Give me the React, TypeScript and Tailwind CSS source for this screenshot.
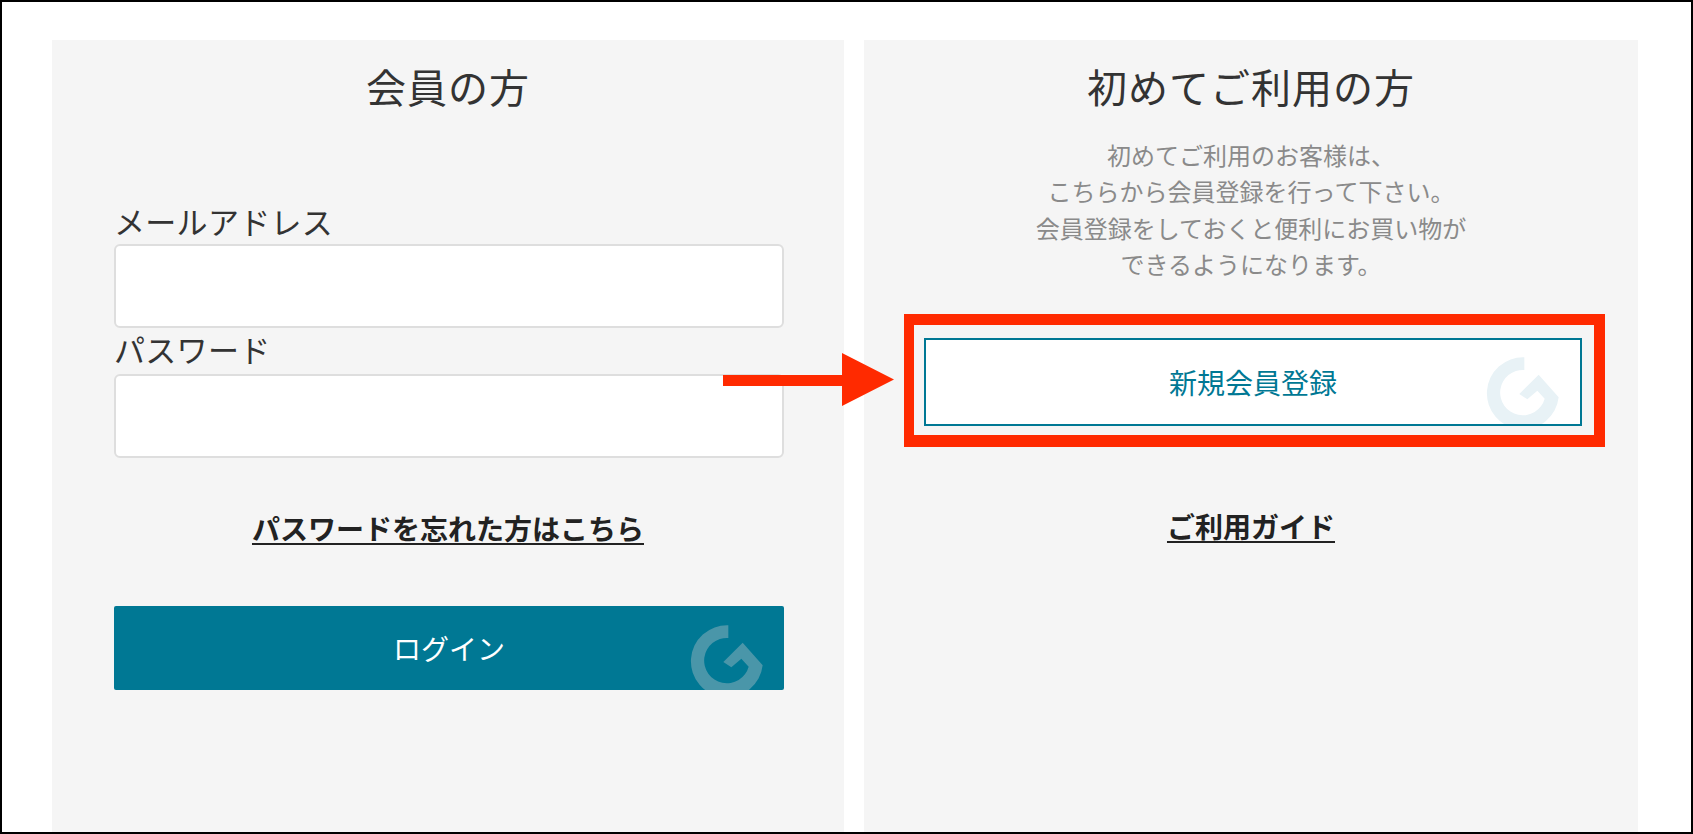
const FONT = "font-['Noto_Sans_CJK_JP','Noto_Sans',sans-serif]";

function GMark({ className, fill }: { className: string; fill: string }) {
  return (
    <svg viewBox="90 66 222 222" className={className} aria-hidden="true">
      <path
        fill={fill}
        d="M205 70A108 108 0 1 0 308 190L248 122L190 180L214 196L244 170L266 194A68 68 0 1 1 205 108Z"
      />
    </svg>
  );
}

function Field({ label, className, inputClassName }: { label: string; className: string; inputClassName: string }) {
  return (
    <div className={className}>
      <label className="block text-[31px] leading-[32px] tracking-[0.3px] text-[#333]">{label}</label>
      <input
        type="text"
        className={`block h-[84px] w-full rounded-md border-2 border-[#dedede] bg-white outline-none ${inputClassName}`}
      />
    </div>
  );
}

export default function App() {
  return (
    <div className={`relative box-border flex h-screen w-full gap-[20px] overflow-hidden border-2 border-black bg-white pl-[50px] pt-[38px] ${FONT}`}>
      {/* 会員の方 */}
      <section className="w-[792px] bg-[#f5f5f5] pl-[62px] pr-[60px] pt-[22px]">
        <h2 className="pr-[2px] text-center text-[40px] leading-[48px] tracking-[1px] text-[#333]">会員の方</h2>
        <Field label="メールアドレス" className="mt-[95px]" inputClassName="mt-[7px]" />
        <Field label="パスワード" className="mt-[5px]" inputClassName="mt-[9px]" />
        <p className="mt-[52px] pr-[2px] text-center text-[28px] font-bold leading-[36px] text-[#222]">
          <a className="underline underline-offset-[3px]">パスワードを忘れた方はこちら</a>
        </p>
        <button className="relative mt-[60px] block h-[84px] w-full overflow-hidden rounded-[2px] bg-[#007894] text-[28px] text-white">
          ログイン
          <GMark className="absolute right-[20px] top-[18px] h-[74px] w-[74px]" fill="#4a96a9" />
        </button>
      </section>

      {/* 初めてご利用の方 */}
      <section className="w-[774px] bg-[#f5f5f5] pt-[22px]">
        <h2 className="text-center text-[40px] leading-[48px] tracking-[1px] text-[#333]">初めてご利用の方</h2>
        <p className="mt-[26.5px] text-center text-[24px] leading-[36.5px] text-[#8a8a8a]">
          初めてご利用のお客様は、
          <br />
          こちらから会員登録を行って下さい。
          <br />
          会員登録をしておくと便利にお買い物が
          <br />
          できるようになります。
        </p>
        <div className="ml-[40px] mt-[31.5px] box-border h-[133px] w-[701px] border-b-[12px] border-l-[10px] border-r-[11px] border-t-[11px] border-[#ff2a00] pb-[9px] pl-[10px] pr-[12px] pt-[13px]">
          <button className="relative box-border block h-full w-full overflow-hidden border-2 border-[#007894] bg-white text-[28px] text-[#007894]">
            新規会員登録
            <GMark className="absolute right-[20px] top-[16px] h-[74px] w-[74px]" fill="#e8f2f6" />
          </button>
        </div>
        <p className="mt-[61px] text-center text-[28px] font-bold leading-[36px] text-[#222]">
          <a className="underline underline-offset-[3px]">ご利用ガイド</a>
        </p>
      </section>

      {/* annotation arrow */}
      <svg className="absolute left-[721px] top-[351px] h-[53px] w-[171px]" viewBox="0 0 171 53" aria-hidden="true">
        <path fill="#ff2a00" d="M0 22H119V0L171 26.5L119 53V33H0Z" />
      </svg>
    </div>
  );
}
